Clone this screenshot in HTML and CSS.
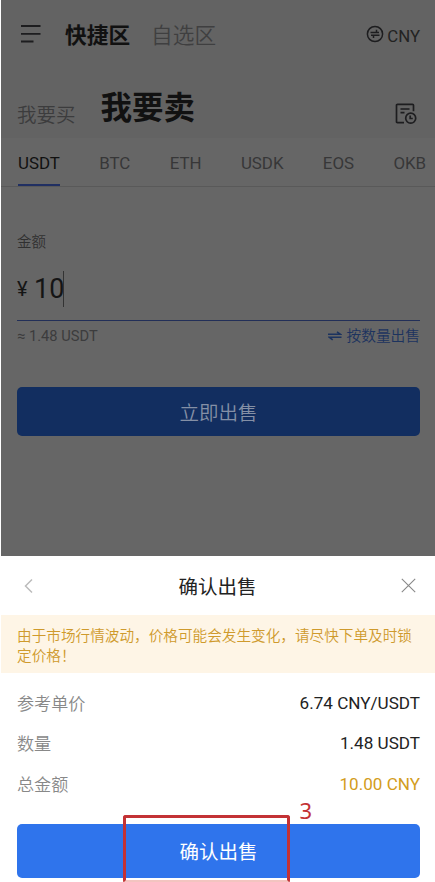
FILE: index.html
```html
<!DOCTYPE html>
<html lang="zh-CN">
<head>
<meta charset="utf-8">
<title>确认出售</title>
<link rel="stylesheet" href="styles.css">
</head>
<body>
<div class="app">
  <main class="page">
    <header class="top">
      <div class="nav">
        <svg class="menu" width="20" height="20" viewBox="0 0 20 20"><path d="M0 2h19.500M0 9.800h19.500M0 17.500h12.500"/></svg>
        <span class="zone active">快捷区</span>
        <span class="zone">自选区</span>
        <span class="currency">
          <svg width="18" height="18" viewBox="0 0 18 18"><circle cx="9" cy="9" r="7.600"/><path d="M4.500 7.500h8.500M10.500 7.500V4.800M13.500 10.300H5M7.500 10.300V13"/></svg>
          <span>CNY</span>
        </span>
      </div>
      <div class="sides">
        <span class="buy">我要买</span>
        <span class="sell">我要卖</span>
        <svg class="orders" width="22" height="22" viewBox="0 0 22 22"><path d="M9 19.700H2.500q-1 0-1-1V2.300q0-1 1-1h15q1 0 1 1v6M5.500 6h9M5.500 9.700h4"/><circle cx="15.700" cy="15.200" r="5"/><path d="M15.200 12.500v3h2.600"/></svg>
      </div>
    </header>
    <nav class="tabs">
      <span class="tab current">USDT</span><span class="tab">BTC</span><span class="tab">ETH</span><span class="tab">USDK</span><span class="tab">EOS</span><span class="tab">OKB</span>
    </nav>
    <section class="form">
      <div class="label">金额</div>
      <div class="amount"><span class="yen">¥</span><span class="value">10</span><i class="caret"></i></div>
      <div class="convert">
        <span class="approx">≈ 1.48 USDT</span>
        <span class="switch"><svg width="14" height="10" viewBox="0 0 14 10"><path d="M0 3.300h12.500L9 .800M13.500 6.200H1.200l3.500 2.700"/></svg>按数量出售</span>
      </div>
      <div class="btn dim">立即出售</div>
    </section>
  </main>
  <section class="sheet">
    <div class="title">
      <svg width="10" height="16" viewBox="0 0 10 16"><path class="back" d="M8 1.500L1.500 8 8 14.500"/></svg>
      <span>确认出售</span>
      <svg width="15" height="15" viewBox="0 0 15 15"><path class="close" d="M.800.800l13.400 13.400M14.200.800L.800 14.200"/></svg>
    </div>
    <div class="notice">由于市场行情波动，价格可能会发生变化，请尽快下单及时锁定价格！</div>
    <div class="rows">
      <div class="row"><span>参考单价</span><b>6.74 CNY/USDT</b></div>
      <div class="row"><span>数量</span><b>1.48 USDT</b></div>
      <div class="row"><span>总金额</span><b class="gold">10.00 CNY</b></div>
    </div>
    <div class="btn confirm">确认出售<div class="mark"><span class="step">3</span></div></div>
  </section>
</div>
</body>
</html>
```

FILE: styles.css
```css
* { box-sizing: border-box; }
body {
  margin: 0;
  background: #fff;
  font-family: Roboto, "Noto Sans CJK SC", sans-serif;
  overflow: hidden;
}
svg { display: block; flex: none; fill: none; stroke: #1d1d1f; }
.app { width: 435px; height: 882px; padding-left: 1px; overflow: hidden; }
.page { height: 556px; background: #666; }
.top { height: 138px; background: #636363; padding: 14px 15px 0 20px; }
.nav { display: flex; align-items: center; height: 40px; }
.menu { stroke-width: 1.8; margin-right: 24px; }
.zone { font-size: 21.7px; color: #3f3f40; font-weight: 350; margin-right: 21px; white-space: nowrap; padding-bottom: 2px; }
.zone.active { color: #111; font-weight: 700; }
.currency { display: flex; align-items: center; gap: 3px; margin-left: auto; font-size: 16.8px; color: #222; line-height: 20px; }
.currency span { padding-top: 3px; }
.currency svg { stroke-width: 1.5; }
.sides { display: flex; align-items: center; height: 60px; margin-top: 25px; margin-left: -4px; }
.buy { font-size: 19.5px; font-weight: 350; color: #3c3c3d; line-height: 30px; padding-top: 13px; }
.sell { font-size: 31.500px; font-weight: 700; color: #111; margin-left: 25px; line-height: 40px; }
.orders { margin-left: auto; margin-right: 3px; margin-top: 9px; stroke-width: 1.7; }
.tabs { display: flex; height: 49px; border-bottom: 1px solid #595959; padding-left: 17px; overflow: hidden; }
.tab { font-size: 16.900px; line-height: 51px; color: #373738; margin-right: 39.300px; flex: none; }
.tab.current { color: #111; border-bottom: 3px solid #202f62; height: 49px; }
.form { padding: 45px 15px 0 16px; }
.label { font-size: 14.500px; line-height: 22px; font-weight: 350; color: #303030; }
.amount { display: flex; align-items: center; height: 67px; border-bottom: 1.500px solid #222f58; padding-top: 3px; color: #151515; }
.yen { font-size: 20px; width: 17px; padding-top: 1px; }
.value { font-size: 27px; }
.caret { width: 1px; height: 36px; margin-left: -1px; background: #333; }
.convert { display: flex; justify-content: space-between; align-items: center; height: 31px; font-size: 14.700px; color: #3c3c3d; }
.approx { padding-bottom: 1px; }
.switch { display: flex; align-items: center; gap: 5px; color: #1c335f; font-weight: 350; line-height: 20px; padding-bottom: 1px; }
.switch svg { stroke: #1c335f; stroke-width: 1.600; }
.btn { display: flex; align-items: center; justify-content: center; border-radius: 5px; font-size: 19.500px; }
.dim { margin-top: 35px; height: 49px; background: #122e60; color: #8490a6; font-weight: 350; padding-bottom: 1px; }
.sheet { background: #fff; height: 326px; }
.title { display: flex; justify-content: space-between; align-items: center; height: 59px; padding: 0 19px 0 23px; font-size: 19.500px; color: #222; }
.back { stroke: #bbb; stroke-width: 1.500; }
.close { stroke: #888; stroke-width: 1.100; }
.notice { height: 58px; background: #fef5e6; padding: 11px 15px 0 16px; font-size: 14.630px; line-height: 20px; color: #cf9a2c; font-weight: 350; }
.rows { padding: 10px 15px 0 16px; }
.row { display: flex; justify-content: space-between; align-items: center; height: 40.300px; font-size: 17.100px; color: #888; font-weight: 350; }
.row span { padding-bottom: 1px; }
.row b { font-weight: 400; color: #222; }
.row .gold { color: #d39c20; }
.confirm { position: relative; margin: 20px 15px 0 16px; height: 54px; background: #2f74ec; color: #fff; }
.mark { position: absolute; left: 106px; top: -9px; width: 167px; height: 68px; border: 3px solid #c33235; border-bottom-color: #f3c4c0; border-radius: 3px; }
.step { position: absolute; right: -25px; top: -21px; font: 22px/26px "Noto Sans", sans-serif; color: #c33235; }
```
